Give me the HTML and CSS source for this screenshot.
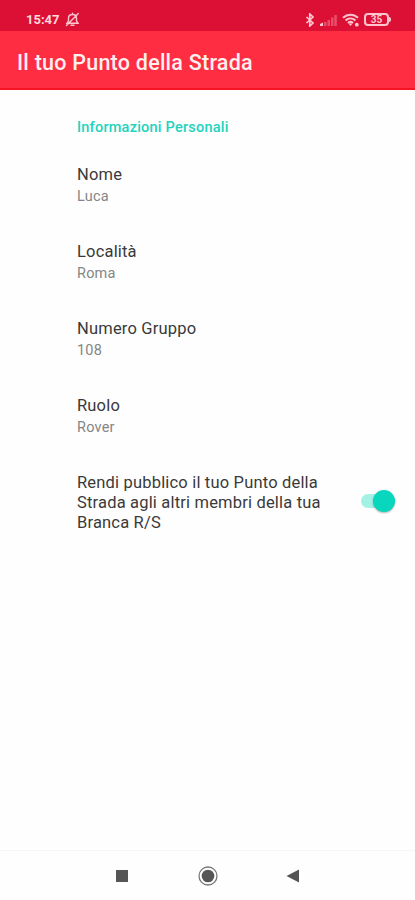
FILE: index.html
```html
<!DOCTYPE html>
<html lang="it">
<head>
    <meta charset="UTF-8">
    <meta name="viewport" content="width=device-width, initial-scale=1.0">
    <title>Il tuo Punto della Strada</title>
    <link rel="stylesheet" href="styles.css">
</head>
<body>
    <!-- Barra di stato -->
    <div class="status-bar">
        <span class="time">15:47</span>
        <svg class="bell" width="15" height="15" viewBox="0 0 15 15" fill="none" stroke="currentColor" stroke-width="1.4" stroke-linecap="round">
            <path d="M2 11.2h11L11.5 9V6.2C11.5 4 9.8 2.5 7.5 2.5S3.5 4 3.500 6.200V9zM6 13.3h3M7.5 1.2v1M1.5 13.5L13.3 1.5"/>
        </svg>
        <div class="status-icons">
            <svg width="10" height="14" viewBox="0 0 10 14" fill="none" stroke="currentColor" stroke-width="1.7">
                <path d="M1.5 4L8 10l-3.200 3V1L8 4l-6.500 6"/>
            </svg>
            <svg class="signal" width="17" height="12" viewBox="0 0 17 12" fill="currentColor">
                <path d="M0 12V10l3-1.500V12z"/>
                <path opacity=".35" d="M4 8h2.500v4H4zM7.500 6H10v6H7.500zM11 3.500h2.500V12H11zM14.300 1h2.500v11h-2.500z"/>
            </svg>
            <svg class="wifi" width="18" height="14" viewBox="0 0 18 14" fill="none" stroke="currentColor" stroke-width="2">
                <path d="M1 4.800C5.500.700 11.500.700 16 4.800M3.500 7.500c3-2.800 7-2.800 10 0M6 10c1.600-1.500 3.400-1.500 5 0"/>
                <path fill="currentColor" stroke="none" d="M6.500 10.500h4l-2 2.500z"/>
                <circle cx="14.800" cy="11.700" r="1.900" fill="currentColor" stroke="none"/>
            </svg>
            <div class="battery">35</div>
        </div>
    </div>

    <header class="toolbar">
        <h1>Il tuo Punto della Strada</h1>
    </header>

    <main class="settings">
        <h2>Informazioni Personali</h2>
        <div class="item">
            <div class="label">Nome</div>
            <div class="value">Luca</div>
        </div>
        <div class="item">
            <div class="label">Località</div>
            <div class="value">Roma</div>
        </div>
        <div class="item">
            <div class="label">Numero Gruppo</div>
            <div class="value">108</div>
        </div>
        <div class="item">
            <div class="label">Ruolo</div>
            <div class="value">Rover</div>
        </div>
        <div class="item item-switch">
            <div class="label">Rendi pubblico il tuo Punto della Strada agli altri membri della tua Branca R/S</div>
            <div class="switch"><div class="thumb"></div></div>
        </div>
    </main>

    <!-- Tasti di navigazione -->
    <nav class="nav-bar">
        <svg width="22" height="22" viewBox="0 0 22 22" fill="#555">
            <rect x="5" y="5" width="12" height="12"/>
        </svg>
        <svg width="22" height="22" viewBox="0 0 22 22" fill="#555">
            <circle cx="11" cy="11" r="9" fill="none" stroke="#777" stroke-width="1.3"/>
            <circle cx="11" cy="11" r="6.3"/>
        </svg>
        <svg width="22" height="22" viewBox="0 0 22 22" fill="#555">
            <path d="M4.500 11L17 4.500v13z"/>
        </svg>
    </nav>
</body>
</html>
```

FILE: styles.css
```css
* {
    box-sizing: border-box;
}

body {
    margin: 0;
    height: 100vh;
    display: flex;
    flex-direction: column;
    background: #fefefe;
    font-family: Roboto, sans-serif;
    overflow: hidden;
}

/* Barra di stato */
.status-bar {
    height: 31px;
    padding: 8px 24px 0 26px;
    display: flex;
    align-items: center;
    background: #dc1035;
    color: #ffc4cd;
}

.time {
    width: 34px;
    font-size: 13px;
    font-weight: 700;
    color: #ffd8dc;
    white-space: nowrap;
}

.bell {
    margin-left: 5px;
}

.status-icons {
    margin-left: auto;
    display: flex;
    align-items: center;
}

.signal {
    margin-left: 5px;
}

.wifi {
    margin-left: 5px;
}

.battery {
    position: relative;
    width: 25px;
    height: 13px;
    margin: 0 2px 0 4px;
    border: 2px solid #ffc4cd;
    border-radius: 4px;
    font-size: 10px;
    font-weight: 700;
    line-height: 10px;
    text-align: center;
}

/* Polo della batteria */
.battery::after {
    content: "";
    position: absolute;
    top: 2px;
    right: -4px;
    width: 2px;
    height: 5px;
    border-radius: 0 2px 2px 0;
    background: #ffc4cd;
}

/* Intestazione */
.toolbar {
    height: 59px;
    padding: 5px 17px 0;
    display: flex;
    align-items: center;
    background: #ff2d42;
    border-bottom: 2px solid #f91423;
}

.toolbar h1 {
    margin: 0;
    font-size: 21.5px;
    font-weight: 500;
    letter-spacing: 0.24px;
    color: #fff0ef;
    white-space: nowrap;
}

/* Elenco impostazioni */
.settings {
    flex: 1;
    padding: 28px 20px 0 77px;
}

.settings h2 {
    margin: 0 0 27px;
    font-size: 14.5px;
    font-weight: 500;
    line-height: 20px;
    letter-spacing: 0.22px;
    color: #22d3bd;
}

.item {
    height: 77px;
}

.label {
    font-size: 16.5px;
    line-height: 20px;
    letter-spacing: 0.18px;
    color: #3a3a3a;
}

.value {
    margin-top: 2px;
    font-size: 14.5px;
    line-height: 20px;
    letter-spacing: 0.2px;
    color: #858585;
}

.item-switch {
    display: flex;
    justify-content: space-between;
}

.item-switch .label {
    width: 255px;
}

.switch {
    width: 34px;
    height: 14px;
    margin-top: 21px;
    display: flex;
    align-items: center;
    justify-content: flex-end;
    border-radius: 7px;
    background: #a3f2e5;
}

.thumb {
    width: 22px;
    height: 22px;
    flex-shrink: 0;
    border-radius: 50%;
    background: #08d6bd;
    box-shadow: 0 1px 2px rgba(0, 0, 0, 0.3);
}

/* Barra di navigazione */
.nav-bar {
    height: 50px;
    padding: 0 111px;
    display: flex;
    align-items: center;
    justify-content: space-between;
    border-top: 1px solid #f6f6f6;
}
```
